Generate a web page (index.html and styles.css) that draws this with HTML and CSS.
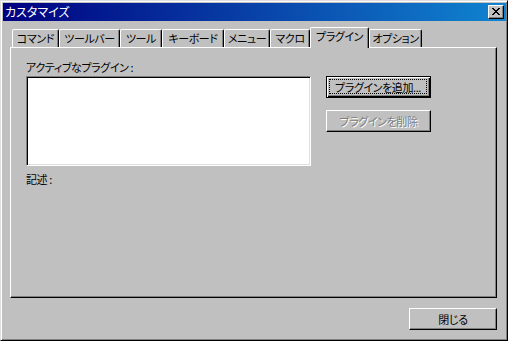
FILE: index.html
```html
<!DOCTYPE html>
<html lang="ja">
<head>
<meta charset="utf-8">
<title>カスタマイズ</title>
<link rel="stylesheet" href="styles.css">
</head>
<body>
<div class="window">
  <div class="titlebar">
    <span class="title">カスタマイズ</span>
    <button class="close" aria-label="閉じる">
      <svg width="8" height="7" viewBox="0 0 8 7" shape-rendering="crispEdges">
        <path d="M0 0h2v1h-2zM6 0h2v1h-2zM1 1h2v1h-2zM5 1h2v1h-2zM2 2h4v1h-4zM3 3h2v1h-2zM2 4h4v1h-4zM1 5h2v1h-2zM5 5h2v1h-2zM0 6h2v1h-2zM6 6h2v1h-2z" fill="#000"/>
      </svg>
    </button>
  </div>
  <div class="content">
    <div class="tabs">
      <div class="tab t1">コマンド</div>
      <div class="tab t2">ツールバー</div>
      <div class="tab t3">ツール</div>
      <div class="tab t4">キーボード</div>
      <div class="tab t5">メニュー</div>
      <div class="tab t6">マクロ</div>
      <div class="tab t7 selected">プラグイン</div>
      <div class="tab t8">オプション</div>
    </div>
    <div class="panel">
      <div class="row">
        <div class="left">
          <div class="label">アクティブなプラグイン :</div>
          <div class="listbox"></div>
          <div class="label desc">記述 :</div>
        </div>
        <div class="buttons">
          <button class="btn default"><span class="focus">プラグインを追加...</span></button>
          <button class="btn disabled" disabled>プラグインを削除</button>
        </div>
      </div>
    </div>
    <div class="footer">
      <button class="btn close-btn">閉じる</button>
    </div>
  </div>
</div>
</body>
</html>
```

FILE: styles.css
```css
* { box-sizing: border-box; }
html, body {
  margin: 0;
  padding: 0;
  background: #c0c0c0;
}
body {
  width: 508px;
  height: 341px;
  overflow: hidden;
  font-family: "Noto Sans CJK JP", "Noto Sans", sans-serif;
  font-size: 11px;
  letter-spacing: -0.4px;
  font-feature-settings: "palt";
  color: #000;
}
.window {
  width: 508px;
  height: 341px;
  background: #c0c0c0;
  border-top: 1px solid #dfdfdf;
  border-left: 1px solid #dfdfdf;
  border-right: 1px solid #000;
  border-bottom: 1px solid #000;
  box-shadow: inset 1px 1px 0 #fff, inset -1px -1px 0 #808080;
  padding: 2px 1px 0 2px;
  display: flex;
  flex-direction: column;
}
.titlebar {
  height: 18px;
  flex: none;
  background: linear-gradient(to right, #000080, #1084d0);
  display: flex;
  align-items: center;
  justify-content: space-between;
  padding: 0 2px 0 2px;
}
.title {
  color: #fff;
  font-size: 12px;
  line-height: 18px;
  letter-spacing: 0;
}
.close {
  width: 16px;
  height: 14px;
  padding: 0;
  margin: 0;
  background: #c0c0c0;
  border-top: 1px solid #fff;
  border-left: 1px solid #fff;
  border-right: 1px solid #000;
  border-bottom: 1px solid #000;
  box-shadow: inset -1px -1px 0 #808080;
  display: flex;
  align-items: center;
  justify-content: center;
}
.close svg { display: block; margin: 0 1px 1px 0; }
.content {
  flex: 1;
  display: flex;
  flex-direction: column;
  padding: 6px 9px 0 7px;
}
.tabs {
  display: flex;
  align-items: flex-end;
  height: 20px;
  margin-left: 2px;
  position: relative;
  z-index: 1;
}
.tab {
  height: 18px;
  border-top: 1px solid #fff;
  border-left: 1px solid #fff;
  border-right: 1px solid #000;
  border-radius: 2px 2px 0 0;
  box-shadow: inset -1px 0 0 #808080;
  background: #c0c0c0;
  text-align: center;
  line-height: 16px;
  white-space: nowrap;
}
.t1 { width: 47px; }
.t2 { width: 61px; }
.t3 { width: 42px; }
.t4 { width: 62px; }
.t5 { width: 46px; }
.t6 { width: 40px; }
.t7 { width: 59px; }
.t8 { width: 53px; }
.tab.selected {
  height: 21px;
  margin-bottom: -1px;
  line-height: 17px;
}
.panel {
  width: 487px;
  height: 251px;
  flex: none;
  border-top: 1px solid #fff;
  border-left: 1px solid #fff;
  border-right: 1px solid #000;
  border-bottom: 1px solid #000;
  box-shadow: inset -1px -1px 0 #808080;
  padding: 12px 0 0 15px;
}
.row {
  display: flex;
  gap: 15px;
}
.left {
  display: flex;
  flex-direction: column;
}
.label {
  line-height: 14px;
  height: 14px;
  margin-bottom: 2px;
  white-space: nowrap;
}
.listbox {
  width: 285px;
  height: 90px;
  background: #fff;
  border-top: 1px solid #808080;
  border-left: 1px solid #808080;
  border-right: 1px solid #fff;
  border-bottom: 1px solid #fff;
  box-shadow: inset 1px 1px 0 #000, inset -1px -1px 0 #dfdfdf;
}
.desc { margin-top: 6px; }
.buttons {
  display: flex;
  flex-direction: column;
  gap: 12px;
  padding-top: 16px;
}
.btn {
  font-family: inherit;
  font-size: 11px;
  letter-spacing: -0.4px;
  font-feature-settings: "palt";
  white-space: nowrap;
  height: 22px;
  width: 105px;
  padding: 0;
  margin: 0;
  color: #000;
  background: #c0c0c0;
  border-top: 1px solid #fff;
  border-left: 1px solid #fff;
  border-right: 1px solid #000;
  border-bottom: 1px solid #000;
  box-shadow: inset -1px -1px 0 #808080;
  display: flex;
  align-items: center;
  justify-content: center;
}
.btn.default {
  border: 1px solid #000;
  box-shadow: inset 1px 1px 0 #fff, inset -1px -1px 0 #000, inset -2px -2px 0 #808080;
  padding: 3px 4px 4px 3px;
}
.focus {
  flex: 1;
  align-self: stretch;
  display: flex;
  align-items: center;
  justify-content: center;
  outline: 1px dotted #000;
  outline-offset: 0;
}
.btn.disabled {
  color: #808080;
  text-shadow: 1px 1px 0 #fff;
}
.footer {
  display: flex;
  justify-content: flex-end;
  padding-top: 10px;
}
.close-btn {
  width: 88px;
  height: 22px;
}
```
